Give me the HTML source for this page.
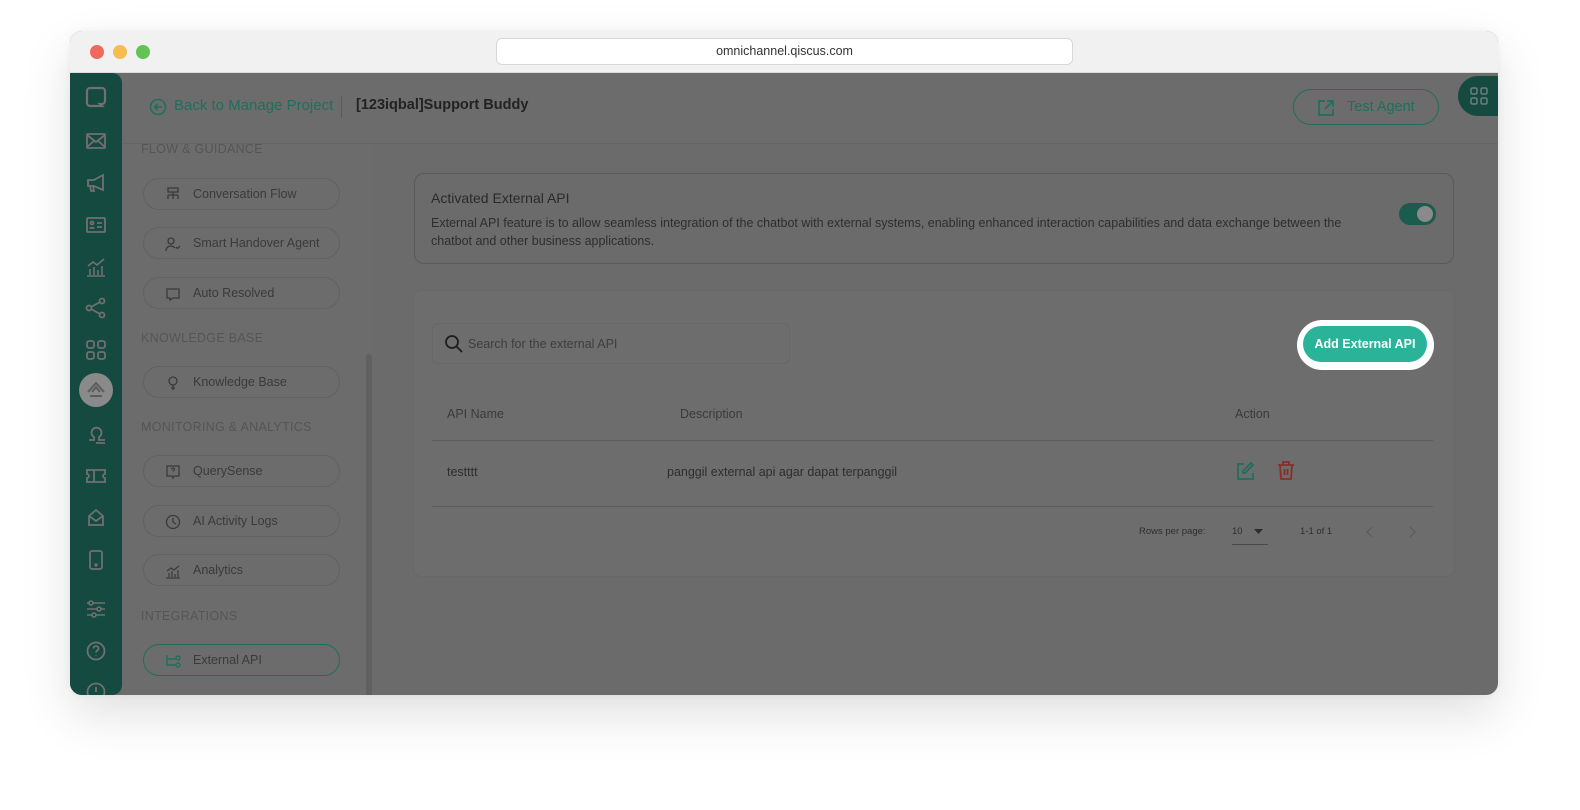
<!DOCTYPE html>
<html><head><meta charset="utf-8"><style>
*{box-sizing:border-box;margin:0;padding:0}
body{width:1580px;height:810px;background:#fff;font-family:"Liberation Sans",sans-serif;position:relative;overflow:hidden}
.abs{position:absolute}
.win{left:70px;top:31px;width:1428px;height:664px;border-radius:12px;overflow:hidden;background:#6b6b6b;box-shadow:0 20px 50px rgba(0,0,0,.12),0 0 8px rgba(0,0,0,.05)}
.tb{left:0;top:0;width:1428px;height:42px;background:#f1f1f1;border-bottom:1px solid #dcdcdc}
.dot{top:14px;width:14px;height:14px;border-radius:50%}
.url{left:426px;top:7px;width:577px;height:27px;background:#fff;border:1px solid #d8d8d8;border-radius:6px;font-size:12.5px;color:#333;text-align:center;line-height:25px}
.rail{left:0;top:42px;width:52px;height:622px;background:#154a40;border-top-right-radius:10px;border-bottom-right-radius:10px}
.ic{position:absolute;left:14px;width:24px;height:24px}
.nav{left:52px;top:113px;width:250px;height:551px;background:#6c6c6c}
.sec{position:absolute;left:19px;font-size:12.5px;color:#555;letter-spacing:.3px}
.pill{position:absolute;left:21px;width:197px;height:32px;border:1px solid #626262;border-radius:16px;font-size:12.5px;color:#3a3a3a;line-height:30px;padding-left:49px}
.pill svg{position:absolute;left:21px;top:8px}
.hdr{left:52px;top:42px;width:1376px;height:71px;background:#6c6c6c;border-bottom:1px solid #656565}
.t{color:#2a2a2a}
</style></head><body>
<div class="abs win">
  <div class="abs tb">
    <div class="abs dot" style="left:20px;background:#ee6a5f"></div>
    <div class="abs dot" style="left:43px;background:#f5bd4f"></div>
    <div class="abs dot" style="left:66px;background:#61c454"></div>
    <div class="abs url">omnichannel.qiscus.com</div>
  </div>
  <div class="abs hdr">
    <svg class="abs" style="left:27px;top:25px" width="18" height="18" viewBox="0 0 18 18" fill="none" stroke="#1f6f5c" stroke-width="1.6"><circle cx="9" cy="9" r="7.5"/><path d="M13 9H5.5M8.5 6L5.5 9l3 3"/></svg>
    <div class="abs" style="left:52px;top:24px;font-size:15px;color:#1f6f5c">Back to Manage Project</div>
    <div class="abs" style="left:219px;top:23px;width:1px;height:22px;background:#5a5a5a"></div>
    <div class="abs" style="left:234px;top:24px;font-size:14.5px;font-weight:bold;color:#222">[123iqbal]Support Buddy</div>
    <div class="abs" style="left:1171px;top:16px;width:146px;height:36px;border:1.5px solid #1f6f5c;border-radius:18px"></div>
    <svg class="abs" style="left:1194px;top:25px" width="20" height="20" viewBox="0 0 20 20" fill="none" stroke="#1f6f5c" stroke-width="1.7"><path d="M9 3H3v14h14v-6M11 3h6v6M17 3l-8 8"/></svg>
    <div class="abs" style="left:1225px;top:26px;font-size:14.5px;color:#1f6f5c">Test Agent</div>
  </div>
  <div class="abs" style="left:1388px;top:45px;width:60px;height:40px;border-radius:20px;background:#154a40"></div>
  <svg class="abs" style="left:1400px;top:56px" width="18" height="18" viewBox="0 0 18 18" fill="none" stroke="#6f7f7a" stroke-width="1.5"><rect x="1" y="1" width="6" height="6" rx="1.5"/><rect x="11" y="1" width="6" height="6" rx="1.5"/><rect x="1" y="11" width="6" height="6" rx="1.5"/><rect x="11" y="11" width="6" height="6" rx="1.5"/></svg>

  <div class="abs rail">
    <svg class="ic" style="top:12px" viewBox="0 0 24 24" fill="none" stroke="#707070" stroke-width="2.2"><path d="M6 3h12a3 3 0 013 3v10a3 3 0 01-3 3h-2l2 2H6a3 3 0 01-3-3V6a3 3 0 013-3z"/></svg>
    <svg class="ic" style="top:56px" viewBox="0 0 24 24" fill="none" stroke="#707070" stroke-width="1.8"><rect x="3" y="5" width="18" height="14" rx="1"/><path d="M3 6l9 7 9-7M3 18l7-6M21 18l-7-6"/></svg>
    <svg class="ic" style="top:98px" viewBox="0 0 24 24" fill="none" stroke="#707070" stroke-width="1.8"><path d="M4 9h6l9-5v15l-9-4H4zM6 15l1 5h3l-1-5"/></svg>
    <svg class="ic" style="top:140px" viewBox="0 0 24 24" fill="none" stroke="#707070" stroke-width="1.8"><rect x="3" y="5" width="18" height="14" rx="1"/><circle cx="8" cy="10" r="1.5"/><path d="M5.5 15h5M13 10h5M13 14h5"/></svg>
    <svg class="ic" style="top:182px" viewBox="0 0 24 24" fill="none" stroke="#707070" stroke-width="1.6"><path d="M3 21h18M6 20v-6M10 20v-8M14 20v-5M18 20v-9M4 11l5-4 4 3 7-6"/></svg>
    <svg class="ic" style="top:223px" viewBox="0 0 24 24" fill="none" stroke="#707070" stroke-width="1.8"><circle cx="5" cy="12" r="2.5"/><circle cx="18" cy="5" r="2.5"/><circle cx="18" cy="19" r="2.5"/><path d="M7 11l9-5M7 13l9 5"/></svg>
    <svg class="ic" style="top:265px" viewBox="0 0 24 24" fill="none" stroke="#707070" stroke-width="1.8"><rect x="3" y="3" width="7" height="7" rx="2"/><rect x="14" y="3" width="7" height="7" rx="2"/><rect x="3" y="14" width="7" height="7" rx="2"/><rect x="14" y="14" width="7" height="7" rx="2"/></svg>
    <div class="abs" style="left:9px;top:300px;width:34px;height:34px;border-radius:50%;background:#8a8a8a"></div>
    <svg class="ic" style="top:305px" viewBox="0 0 24 24" fill="none" stroke="#5d5d5d" stroke-width="2"><path d="M4 14l8-9 8 9M8 14l4-5 4 5M6 18h12"/></svg>
    <svg class="ic" style="top:349px" viewBox="0 0 24 24" fill="none" stroke="#707070" stroke-width="1.8"><path d="M5 18h5v-3a5 5 0 115 0v3M12 21h9M14 18h7"/></svg>
    <svg class="ic" style="top:391px" viewBox="0 0 24 24" fill="none" stroke="#707070" stroke-width="1.8"><path d="M3 6h18v4a2 2 0 000 4v4H3v-4a2 2 0 000-4zM10 6v12"/></svg>
    <svg class="ic" style="top:433px" viewBox="0 0 24 24" fill="none" stroke="#707070" stroke-width="1.8"><path d="M5 10l7-6 7 6v9H5zM5 10l7 5 7-5"/></svg>
    <svg class="ic" style="top:475px" viewBox="0 0 24 24" fill="none" stroke="#707070" stroke-width="1.8"><rect x="6" y="3" width="12" height="18" rx="2"/><circle cx="12" cy="17" r=".8"/></svg>
    <svg class="ic" style="top:524px" viewBox="0 0 24 24" fill="none" stroke="#707070" stroke-width="1.6"><path d="M3 6h18M3 12h18M3 18h18"/><circle cx="7" cy="6" r="2" fill="#154a40"/><circle cx="15" cy="12" r="2" fill="#154a40"/><circle cx="10" cy="18" r="2" fill="#154a40"/></svg>
    <svg class="ic" style="top:566px" viewBox="0 0 24 24" fill="none" stroke="#707070" stroke-width="1.8"><circle cx="12" cy="12" r="8.5"/><path d="M9.5 9.5a2.5 2.5 0 115 0c0 2-2.5 2-2.5 4M12 16.5v.5"/></svg>
    <svg class="ic" style="top:607px" viewBox="0 0 24 24" fill="none" stroke="#707070" stroke-width="1.8"><circle cx="12" cy="12" r="8.5"/><path d="M12 7v5"/></svg>
  </div>

  <div class="abs nav">
    <div class="sec" style="top:-2px">FLOW &amp; GUIDANCE</div>
    <div class="pill" style="top:34px"><svg width="16" height="16" viewBox="0 0 16 16" fill="none" stroke="#3a3a3a" stroke-width="1.3"><rect x="3" y="1" width="10" height="4"/><path d="M8 5v3M3 8h10M3 8v4M8 8v4M13 8v4"/></svg>Conversation Flow</div>
    <div class="pill" style="top:83px"><svg width="16" height="16" viewBox="0 0 16 16" fill="none" stroke="#3a3a3a" stroke-width="1.3"><circle cx="6" cy="5" r="3"/><path d="M1 15c0-3 2-5 5-5 2 0 3 1 4 2M11 11l1.5 1.5L15 10"/></svg>Smart Handover Agent</div>
    <div class="pill" style="top:133px"><svg width="16" height="16" viewBox="0 0 16 16" fill="none" stroke="#3a3a3a" stroke-width="1.3"><path d="M2 3h12v9H8l-3 2v-2H2zM6 7.5h.1M8 7.5h.1M10 7.5h.1"/></svg>Auto Resolved</div>
    <div class="sec" style="top:187px">KNOWLEDGE BASE</div>
    <div class="pill" style="top:222px"><svg width="16" height="16" viewBox="0 0 16 16" fill="none" stroke="#3a3a3a" stroke-width="1.3"><circle cx="8" cy="6" r="4"/><path d="M6 13h4M8 10v5"/></svg>Knowledge Base</div>
    <div class="sec" style="top:276px">MONITORING &amp; ANALYTICS</div>
    <div class="pill" style="top:311px"><svg width="16" height="16" viewBox="0 0 16 16" fill="none" stroke="#3a3a3a" stroke-width="1.3"><path d="M2 2h12v10H9l-1 2-1-2H2z"/><path d="M6.5 5.5a1.5 1.5 0 113 0c0 1-1.5 1-1.5 2M8 9.5v.3"/></svg>QuerySense</div>
    <div class="pill" style="top:361px"><svg width="16" height="16" viewBox="0 0 16 16" fill="none" stroke="#3a3a3a" stroke-width="1.3"><circle cx="8" cy="8" r="6.5"/><path d="M8 4v4l3 2"/></svg>AI Activity Logs</div>
    <div class="pill" style="top:410px"><svg width="16" height="16" viewBox="0 0 16 16" fill="none" stroke="#3a3a3a" stroke-width="1.2"><path d="M1 15h14M4 14v-4M7 14V8M10 14v-3M13 14V7M2 8l4-3 3 2 5-4"/></svg>Analytics</div>
    <div class="sec" style="top:465px">INTEGRATIONS</div>
    <div class="pill" style="top:500px;border:1.5px solid #1f6f5c"><svg width="16" height="16" viewBox="0 0 16 16" fill="none" stroke="#1f6f5c" stroke-width="1.4"><path d="M2 2v10h9M2 6h9"/><circle cx="13" cy="5" r="2"/><circle cx="13" cy="12" r="2"/></svg>External API</div>
    <div class="abs" style="left:244px;top:210px;width:6px;height:370px;background:#606060;border-radius:3px"></div>
  </div>

  <div class="abs" style="left:344px;top:142px;width:1040px;height:91px;border:1px solid #5a5a5a;border-radius:10px">
    <div class="abs t" style="left:16px;top:16px;font-size:14px">Activated External API</div>
    <div class="abs" style="left:16px;top:40px;width:925px;font-size:12.5px;line-height:18px;color:#2e2e2e">External API feature is to allow seamless integration of the chatbot with external systems, enabling enhanced interaction capabilities and data exchange between the chatbot and other business applications.</div>
    <div class="abs" style="left:984px;top:29px;width:37px;height:22px;border-radius:11px;background:#1a5c4d"></div>
    <div class="abs" style="left:1002px;top:32px;width:16px;height:16px;border-radius:50%;background:#8a8a8a"></div>
  </div>

  <div class="abs" style="left:343px;top:259px;width:1042px;height:287px;background:#6d6d6d;border-radius:8px;border:1px solid #686868"></div>
  <div class="abs" style="left:362px;top:292px;width:358px;height:41px;border:1px solid #676767;border-radius:6px;background:#6d6d6d"></div>
  <svg class="abs" style="left:374px;top:303px" width="20" height="20" viewBox="0 0 20 20" fill="none" stroke="#1e1e1e" stroke-width="1.8"><circle cx="8" cy="8" r="6"/><path d="M12.5 12.5L18 18"/></svg>
  <div class="abs" style="left:398px;top:306px;font-size:12.5px;color:#3e3e3e">Search for the external API</div>

  <div class="abs" style="left:1227px;top:289px;width:137px;height:50px;border-radius:25px;background:#fff"></div>
  <div class="abs" style="left:1233px;top:295px;width:124px;height:36px;border-radius:18px;background:#2bb39a;color:#fff;font-size:12.5px;font-weight:bold;text-align:center;line-height:36px">Add External API</div>

  <div class="abs" style="left:377px;top:376px;font-size:12.5px;color:#3a3a3a">API Name</div>
  <div class="abs" style="left:610px;top:376px;font-size:12.5px;color:#3a3a3a">Description</div>
  <div class="abs" style="left:1165px;top:376px;font-size:12.5px;color:#3a3a3a">Action</div>
  <div class="abs" style="left:362px;top:409px;width:1001px;height:1px;background:#5c5c5c"></div>
  <div class="abs" style="left:377px;top:434px;font-size:12.5px;color:#2e2e2e">testttt</div>
  <div class="abs" style="left:597px;top:434px;font-size:12.5px;color:#2e2e2e">panggil external api agar dapat terpanggil</div>
  <svg class="abs" style="left:1165px;top:430px" width="20" height="20" viewBox="0 0 20 20" fill="none" stroke="#1f6f5c" stroke-width="1.8"><path d="M9 3H3v15h15v-6M16 2l2 2-8 8H8v-2z"/></svg>
  <svg class="abs" style="left:1206px;top:429px" width="20" height="21" viewBox="0 0 20 21" fill="none" stroke="#8e2b2b" stroke-width="1.8"><path d="M2 5h16M7 5V2h6v3M4 5l1 14h10l1-14M8.5 9v6M11.5 9v6"/></svg>
  <div class="abs" style="left:362px;top:475px;width:1001px;height:1px;background:#5c5c5c"></div>
  <div class="abs" style="left:1069px;top:495px;font-size:9.5px;color:#2e2e2e">Rows per page:</div>
  <div class="abs" style="left:1162px;top:495px;font-size:9.5px;color:#2e2e2e">10</div>
  <svg class="abs" style="left:1184px;top:498px" width="9" height="5" viewBox="0 0 9 5"><path d="M0 0h9L4.5 5z" fill="#2e2e2e"/></svg>
  <div class="abs" style="left:1162px;top:513px;width:36px;height:1px;background:#4a4a4a"></div>
  <div class="abs" style="left:1230px;top:495px;font-size:9.5px;color:#2e2e2e">1-1 of 1</div>
  <svg class="abs" style="left:1296px;top:495px" width="8" height="12" viewBox="0 0 8 12" fill="none" stroke="#5e5e5e" stroke-width="1.4"><path d="M6 1L1 6l5 5"/></svg>
  <svg class="abs" style="left:1338px;top:495px" width="8" height="12" viewBox="0 0 8 12" fill="none" stroke="#5e5e5e" stroke-width="1.4"><path d="M2 1l5 5-5 5"/></svg>
</div>
</body></html>
